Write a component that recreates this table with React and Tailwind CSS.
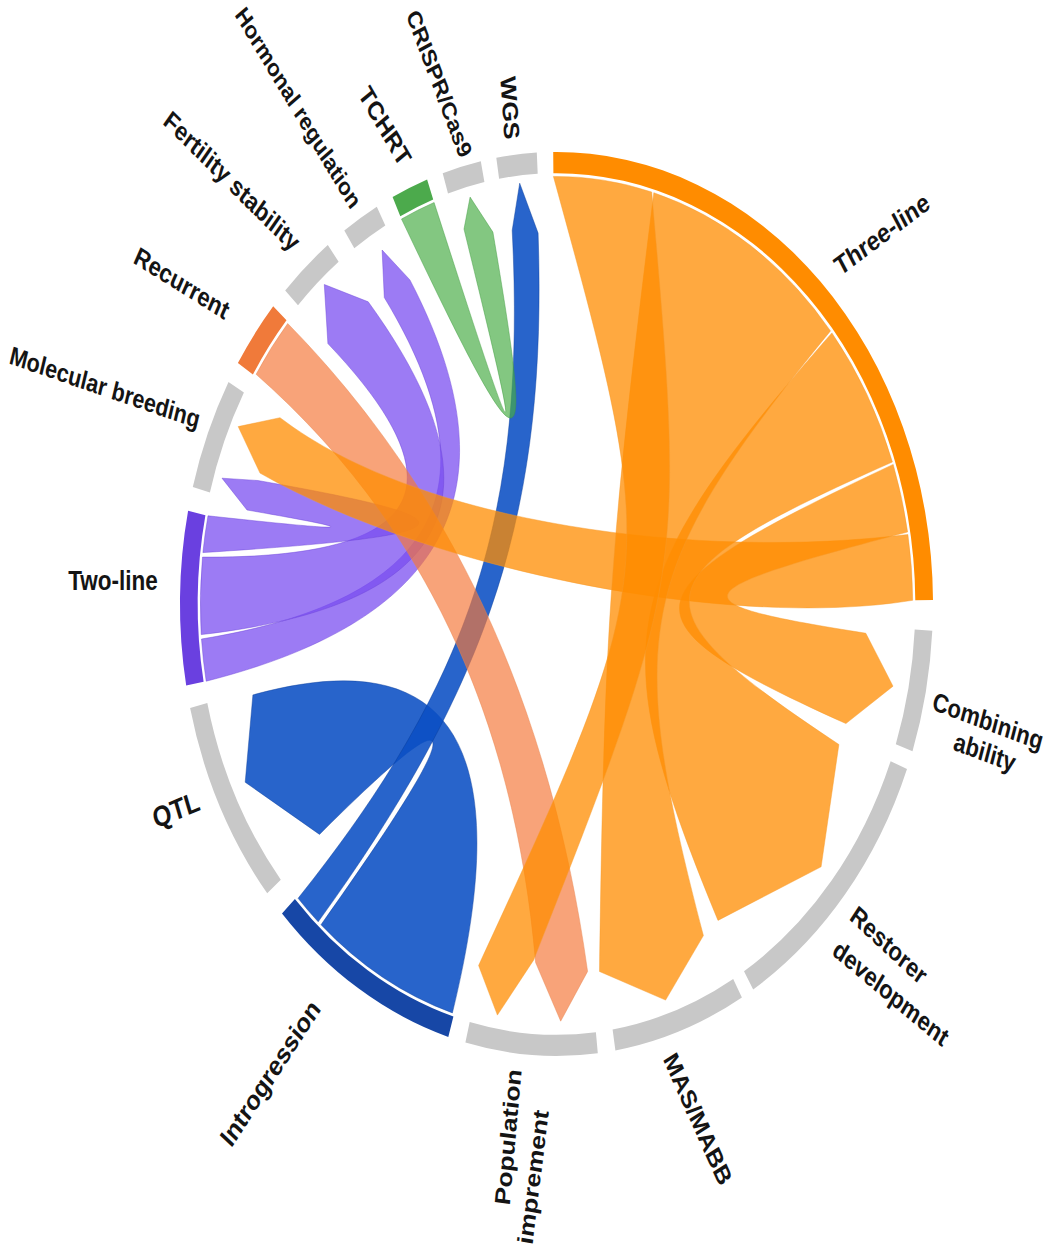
import React from 'react';

// chord diagram, drawn in screen coords on a stretched circle (ellipse)
const CX = 556.5;
const CY = 604;
const RX = 376.5;
const RY = 452;
const K = RY / RX;
const R0 = 0.946; // where ribbons leave the ring

const rad = (d) => (d * Math.PI) / 180;
const pt = (a, r) => [CX + r * RX * Math.sin(rad(a)), CY - r * RY * Math.cos(rad(a))];
const f = (p) => `${p[0].toFixed(1)},${p[1].toFixed(1)}`;

const GREY = '#c8c8c8';

const sectors = [
  { id: 'three', a: [-0.5, 89.5], fill: '#ff8c00' },
  { id: 'comb', a: [93.4, 109], fill: GREY },
  { id: 'rest', a: [111.4, 148.5], fill: GREY },
  { id: 'mas', a: [150.5, 171], fill: GREY },
  { id: 'pop', a: [173.7, 194], fill: GREY },
  { id: 'intro', a: [196.7, 226.8], fill: '#1747a6' },
  { id: 'qtl', a: [230.2, 256.7], fill: GREY },
  { id: 'two', a: [259.6, 281.9], fill: '#6a40e0' },
  { id: 'mol', a: [285, 299.4], fill: GREY },
  { id: 'rec', a: [302.2, 311.2], fill: '#f07a3a' },
  { id: 'fert', a: [313.9, 322.6], fill: GREY },
  { id: 'horm', a: [325.7, 331.5], fill: GREY },
  { id: 'tchrt', a: [334.2, 339.9], fill: '#4caa4c' },
  { id: 'crispr', a: [342.4, 348.4], fill: GREY },
  { id: 'wgs', a: [350.8, 357], fill: GREY },
];

const palette = {
  blue: { fill: '#0a4fc4', op: 0.88, stroke: '#0b3d99' },
  green: { fill: '#48ad45', op: 0.68, stroke: '#3f9a3d' },
  purple: { fill: '#7a4df0', op: 0.74, stroke: '#6a40d8' },
  salmon: { fill: '#f4773a', op: 0.68, stroke: '#e8864f' },
  orange: { fill: '#ff8c00', op: 0.75, stroke: '#f59a2a' },
};

// s: source span, t: target span (arrow shoulders), rs: shoulder radii, tip: [angle, r]
// m1/m2: mid points of the two side curves, k: how sharply they bend
// c1/c2: explicit cubic controls when the mid point way is not enough
const links = [
  { c: 'blue', s: [197, 221.4], t: [231, 256], rs: [0.81, 0.831], tip: [244.5, 0.916], m1: [433, 744], m2: [452, 733], k: 0.67 },
  { c: 'blue', s: [222, 226.5], t: [351.9, 356.6], rs: [0.835, 0.822], tip: [354, 0.936], m1: [476, 588], m2: [497, 590], k: 0.75 },
  { c: 'green', s: [334.2, 339.9], t: [343.5, 348.4], rs: [0.865, 0.84], tip: [345.7, 0.929], m1: [505, 412], m2: [510, 418], k: 0.9 },
  { c: 'purple', s: [259.6, 265.3], t: [326, 331.5], rs: [0.818, 0.816], tip: [329.4, 0.91], m1: [425, 525], m2: [440, 535], k: 0.67 },
  { c: 'purple', s: [265.9, 276.3], t: [313.5, 323.2], rs: [0.837, 0.835], tip: [318.9, 0.938], m1: [400, 505], m2: [432, 530], k: 0.67 },
  { c: 'purple', s: [276.9, 281.9], t: [284.2, 289], rs: [0.848, 0.839], tip: [287.4, 0.931], m1: [330, 527], m2: [418, 525], k: 0.8 },
  { c: 'salmon', s: [302.5, 311], t: [174.2, 184], rs: [0.817, 0.795], tip: [179.3, 0.923], m1: [485, 610], m2: [450, 630], k: 0.67 },
  {
    c: 'orange', s: [80.65, 89.5], t: [290.2, 299.3], rs: [0.839, 0.842], tip: [294.9, 0.932],
    c1: [[730, 630], [430, 570]], c2: [[420, 525], [700, 560]],
  },
  { c: 'orange', s: [70.95, 80.3], t: [94.5, 109], rs: [0.824, 0.813], tip: [101.5, 0.912], m1: [728, 594], m2: [680, 603], k: 0.9 },
  { c: 'orange', s: [50.65, 70.6], t: [112.5, 148.5], rs: [0.812, 0.821], tip: [129.6, 0.912], m1: [690, 594], m2: [650, 615], k: 0.9 },
  { c: 'orange', s: [15.85, 50.3], t: [152, 172], rs: [0.831, 0.821], tip: [161.7, 0.923], m1: [664, 608], m2: [612, 585], k: 0.9 },
  { c: 'orange', s: [-0.5, 15.5], t: [184.4, 194.5], rs: [0.79, 0.826], tip: [189.8, 0.923], m1: [662, 575], m2: [625, 570], k: 1 },
];

const labels = [
  { text: 'WGS', x: 510, y: 108, a: 86, size: 22 },
  { text: 'CRISPR/Cas9', x: 439, y: 84, a: 69.4, size: 20.5 },
  { text: 'TCHRT', x: 385, y: 126, a: 60, size: 22 },
  { text: 'Hormonal regulation', x: 298, y: 108, a: 59.2, size: 20.5 },
  { text: 'Fertility stability', x: 232, y: 181, a: 44.8, size: 22 },
  { text: 'Recurrent', x: 182, y: 283, a: 32, size: 22 },
  { text: 'Molecular breeding', x: 105, y: 387, a: 19, size: 21.5 },
  { text: 'Two-line', x: 113, y: 581, a: 0, size: 22.5 },
  { text: 'QTL', x: 176, y: 810, a: -23, size: 24 },
  { text: 'Introgression', x: 270, y: 1073, a: -57, size: 23 },
  { text: 'Population', x: 508, y: 1137, a: -85, size: 22 },
  { text: 'imprement', x: 533, y: 1177, a: -83, size: 22 },
  { text: 'MAS/MABB', x: 698, y: 1119, a: 66, size: 22 },
  { text: 'Restorer', x: 889, y: 945, a: 43, size: 22 },
  { text: 'development', x: 891, y: 993, a: 40, size: 22 },
  { text: 'Combining', x: 988, y: 721, a: 20.5, size: 22 },
  { text: 'ability', x: 985, y: 752, a: 20.5, size: 22 },
  { text: 'Three-line', x: 882, y: 234, a: -37, size: 22.5 },
];

function ringPath([a1, a2], r1 = 0.953, r2 = 1) {
  const large = a2 - a1 > 180 ? 1 : 0;
  return (
    `M${f(pt(a1, r2))} A${RX * r2},${RY * r2} 0 ${large} 1 ${f(pt(a2, r2))} ` +
    `L${f(pt(a2, r1))} A${RX * r1},${RY * r1} 0 ${large} 0 ${f(pt(a1, r1))} Z`
  );
}

// cubic side of a ribbon that runs A -> B and passes M at t = .5
function side(A, B, M, k) {
  const s = 0.5 - 0.375 * k;
  const P = [(M[0] - (A[0] + B[0]) * s) / (0.75 * k), (M[1] - (A[1] + B[1]) * s) / (0.75 * k)];
  const c1 = [A[0] + k * (P[0] - A[0]), A[1] + k * (P[1] - A[1])];
  const c2 = [B[0] + k * (P[0] - B[0]), B[1] + k * (P[1] - B[1])];
  return `C${f(c1)} ${f(c2)} ${f(B)}`;
}

const fixedSide = (ctrl, B) => `C${f(ctrl[0])} ${f(ctrl[1])} ${f(B)}`;

function linkPath(l) {
  const S1 = pt(l.s[0], R0);
  const S2 = pt(l.s[1], R0);
  const T1 = pt(l.t[0], l.rs[0]);
  const T2 = pt(l.t[1], l.rs[1]);
  const tip = pt(l.tip[0], l.tip[1]);
  const out = l.c1 ? fixedSide(l.c1, T1) : side(S2, T1, l.m1, l.k);
  const back = l.c2 ? fixedSide(l.c2, S1) : side(T2, S1, l.m2, l.k);
  return `M${f(S1)} A${RX * R0},${RY * R0} 0 0 1 ${f(S2)} ${out} L${f(tip)} L${f(T2)} ${back} Z`;
}

// labels sit in a stretched group, so rotate in unstretched space
function Label({ text, x, y, a, size }) {
  const ac = (Math.atan2(Math.sin(rad(a)) / K, Math.cos(rad(a))) * 180) / Math.PI;
  const yc = y / K;
  return (
    <text
      x={x}
      y={yc}
      transform={`rotate(${ac.toFixed(2)} ${x} ${yc.toFixed(2)})`}
      textAnchor="middle"
      dominantBaseline="central"
      fontSize={size}
      fontWeight="700"
      fontFamily="'Liberation Sans', Arial, sans-serif"
      fill="#141414"
    >
      {text}
    </text>
  );
}

export default function App() {
  return (
    <div className="w-[1063px] h-[1248px] bg-white overflow-hidden">
      <svg width="1063" height="1248" viewBox="0 0 1063 1248" className="block">
        {/* ribbons */}
        {links.map((l, i) => {
          const p = palette[l.c];
          return (
            <path
              key={i}
              d={linkPath(l)}
              fill={p.fill}
              fillOpacity={p.op}
              stroke={p.stroke}
              strokeOpacity={0.55}
              strokeWidth={0.8}
            />
          );
        })}

        {/* outer ring */}
        {sectors.map((s) => (
          <path key={s.id} d={ringPath(s.a)} fill={s.fill} />
        ))}

        <g transform={`matrix(1,0,0,${K},0,0)`}>
          {labels.map((l) => (
            <Label key={l.text} {...l} />
          ))}
        </g>
      </svg>
    </div>
  );
}
